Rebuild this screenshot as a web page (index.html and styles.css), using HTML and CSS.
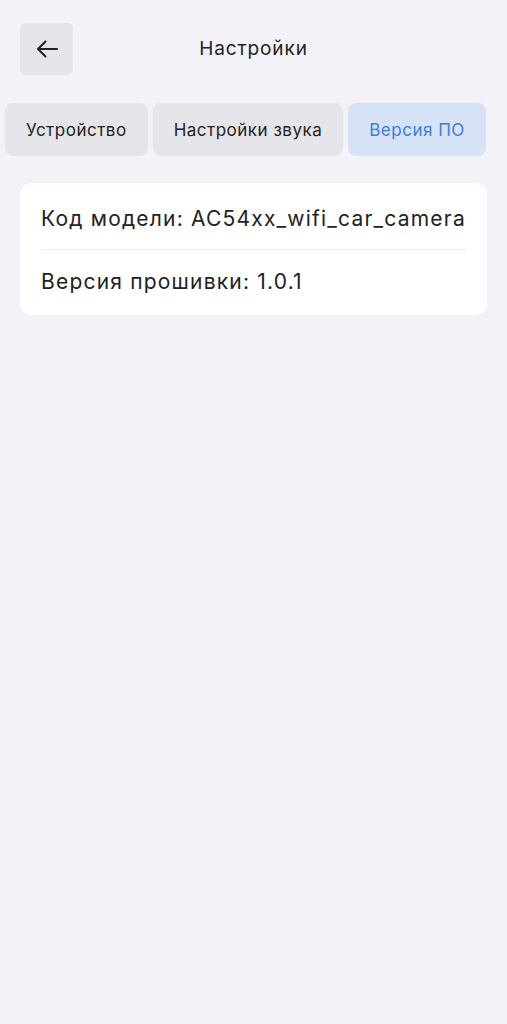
FILE: index.html
```html
<!DOCTYPE html>
<html>
  <head>
    <title>Настройки</title>
    <link rel="stylesheet" href="styles.css">
  </head>
  <body>
    <div class="header">
      <button class="back" type="button">
        <svg width="22" height="18" viewBox="0 0 22 18">
          <path d="M21 9H2M9.5 1.5L2 9l7.5 7.5" fill="none" stroke="#222" stroke-width="2" stroke-linecap="round" stroke-linejoin="round"/>
        </svg>
      </button>
      <h1>Настройки</h1>
    </div>
    <div class="tabs">
      <div class="tab">Устройство</div>
      <div class="tab">Настройки звука</div>
      <div class="tab active">Версия ПО</div>
    </div>
    <div class="card">
      <div class="row first">Код модели: AC54xx_wifi_car_camera</div>
      <div class="row">Версия прошивки: 1.0.1</div>
    </div>
  </body>
</html>
```

FILE: styles.css
```css
* {
  box-sizing: border-box;
}
body {
  font-family: Inter, "Noto Sans", sans-serif;
  margin: 0;
  padding: 0;
  background-color: #f3f2f8;
  color: #222;
  min-height: 1024px;
}
.header {
  position: relative;
  height: 98px;
  padding: 23px 20px 0;
}
.back {
  width: 53px;
  height: 52px;
  border: none;
  border-radius: 5px;
  background-color: #e5e5ea;
  display: flex;
  align-items: center;
  justify-content: center;
  padding: 0;
}
h1 {
  position: absolute;
  left: 0;
  right: 0;
  top: 23px;
  margin: 0;
  height: 52px;
  line-height: 52px;
  text-align: center;
  font-size: 19px;
  font-weight: 400;
  letter-spacing: 0.9px;
  pointer-events: none;
}
.tabs {
  display: flex;
  gap: 5px;
  padding: 5px 5px 0;
}
.tab {
  height: 53px;
  line-height: 54px;
  padding: 0 21px;
  border-radius: 8px;
  background-color: #e5e5ea;
  font-size: 17px;
  letter-spacing: 0.5px;
  white-space: nowrap;
}
.tab.active {
  background-color: #d6e3f7;
  color: #3f7ddb;
}
.card {
  margin: 27px 20px 0;
  padding: 0 21px;
  background-color: #fff;
  border-radius: 12px;
}
.row {
  height: 66px;
  line-height: 64px;
  font-size: 21px;
  letter-spacing: 1.2px;
  white-space: nowrap;
}
.row.first {
  padding-top: 6px;
  line-height: 60px;
}
.row + .row {
  border-top: 1px solid #ececef;
}
```
